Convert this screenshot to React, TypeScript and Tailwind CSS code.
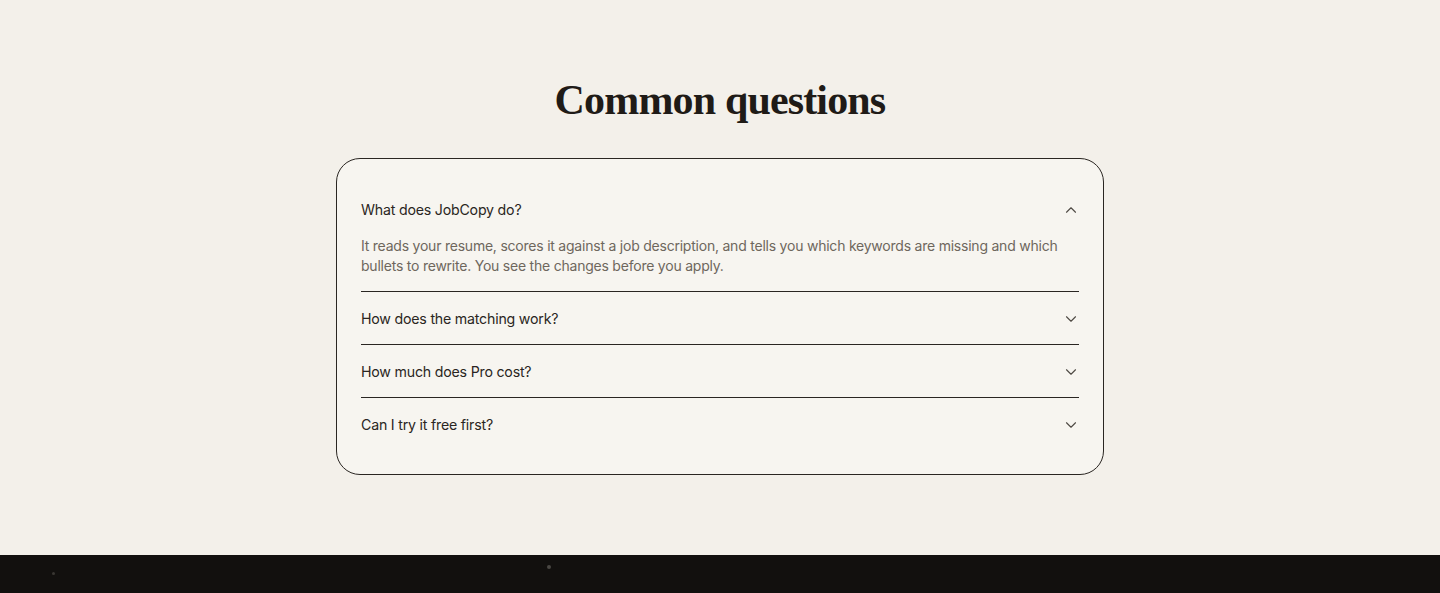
import { useState } from "react";
import { ChevronDown } from "lucide-react";

const faqs = [
  {
    q: "What does JobCopy do?",
    a: "It reads your resume, scores it against a job description, and tells you which keywords are missing and which bullets to rewrite. You see the changes before you apply.",
  },
  {
    q: "How does the matching work?",
    a: "We pull the skills and phrases from the posting and compare them with what your resume already says.",
  },
  {
    q: "How much does Pro cost?",
    a: "Pro is billed monthly and you can cancel any time.",
  },
  {
    q: "Can I try it free first?",
    a: "Yes. Your first few scans are free, no card needed.",
  },
];

export default function App() {
  const [open, setOpen] = useState(0);

  return (
    <div className="min-h-screen bg-[#f3f0ea] font-['Inter',sans-serif]">
      <section className="px-6 pt-[76px] pb-20">
        <h2 className="text-center font-['Liberation_Serif',serif] text-[42px] font-bold leading-[48px] tracking-[-0.02em] text-[#1f1b17] mb-[34px]">
          Common questions
        </h2>

        <div className="mx-auto w-[768px] rounded-3xl border border-[#2a2622] bg-[#f7f5f0] px-6 py-6">
          {faqs.map((item, i) => (
            <div
              key={item.q}
              className={i < faqs.length - 1 ? "border-b border-[#2a2622]" : ""}
            >
              <button
                onClick={() => setOpen(open === i ? -1 : i)}
                className="flex w-full items-center justify-between pt-[17px] pb-[15px] text-left"
              >
                <span className="text-[14.2px] leading-5 tracking-[-0.015em] text-[#2a2622]">
                  {item.q}
                </span>
                <ChevronDown
                  size={18}
                  strokeWidth={1.5}
                  className={`-mr-[1px] text-[#4f4a44] ${open === i ? "rotate-180" : ""}`}
                />
              </button>
              {open === i && (
                <p className="pt-px pb-[15px] text-[14px] leading-5 tracking-[-0.016em] text-[#6e675d]">
                  {item.a}
                </p>
              )}
            </div>
          ))}
        </div>
      </section>

      {/* Footer */}
      <footer className="relative h-[200px] bg-[#12100e]">
        <span className="absolute left-[52px] top-[17px] h-[3px] w-[3px] rounded-full bg-[#3a3733]" />
        <span className="absolute left-[547px] top-[10px] h-[4px] w-[4px] rounded-full bg-[#4a4743]" />
      </footer>
    </div>
  );
}
